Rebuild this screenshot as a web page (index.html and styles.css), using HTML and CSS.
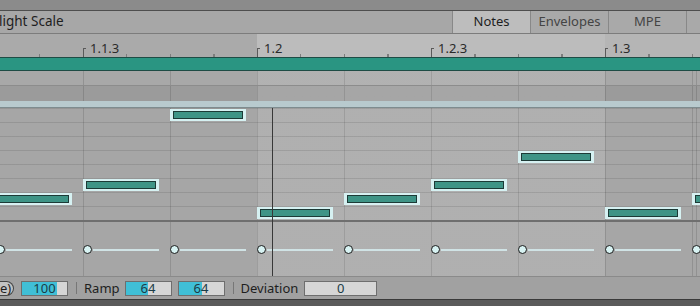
FILE: index.html
```html
<!DOCTYPE html>
<html lang="en">
<head>
    <meta charset="UTF-8">
    <meta name="viewport" content="width=device-width, initial-scale=1.0">
    <title>Clip Notes</title>
    <link rel="stylesheet" href="styles.css">
</head>
<body>
    <div class="editor">
        <div class="top-strip"></div>

        <div class="header">
            <span class="title">light Scale</span>
            <div class="tabs">
                <div class="tab active">Notes</div>
                <div class="tab">Envelopes</div>
                <div class="tab">MPE</div>
                <div class="tab"></div>
            </div>
        </div>

        <div class="ruler">
            <span class="mark">1.1.3</span>
            <span class="mark">1.2</span>
            <span class="mark">1.2.3</span>
            <span class="mark">1.3</span>
        </div>

        <div class="clip-bar"></div>
        <div class="lane lane-a"></div>
        <div class="lane lane-b"></div>
        <div class="fold-band"></div>

        <div class="roll">
            <div class="notes">
                <div class="note" style="grid-column:1;grid-row:7"><span></span></div>
                <div class="note" style="grid-column:2;grid-row:6"><span></span></div>
                <div class="note" style="grid-column:3;grid-row:1"><span></span></div>
                <div class="note" style="grid-column:4;grid-row:8"><span></span></div>
                <div class="note" style="grid-column:5;grid-row:7"><span></span></div>
                <div class="note" style="grid-column:6;grid-row:6"><span></span></div>
                <div class="note" style="grid-column:7;grid-row:4"><span></span></div>
                <div class="note" style="grid-column:8;grid-row:8"><span></span></div>
                <div class="note" style="grid-column:9;grid-row:7"><span></span></div>
            </div>

            <div class="divider"></div>

            <div class="velocity">
                <div class="vel"><i></i><b></b></div>
                <div class="vel"><i></i><b></b></div>
                <div class="vel"><i></i><b></b></div>
                <div class="vel"><i></i><b></b></div>
                <div class="vel"><i></i><b></b></div>
                <div class="vel"><i></i><b></b></div>
                <div class="vel"><i></i><b></b></div>
                <div class="vel"><i></i><b></b></div>
                <div class="vel"><i></i><b></b></div>
            </div>

            <div class="playhead"></div>
        </div>

        <div class="controls">
            <span class="pill">e)</span>
            <span class="field first" style="--fill:78%">100</span>
            <span class="sep"></span>
            <span class="label">Ramp</span>
            <span class="field ramp" style="--fill:50%">64</span>
            <span class="field ramp2" style="--fill:50%">64</span>
            <span class="sep"></span>
            <span class="label">Deviation</span>
            <span class="field wide" style="--fill:0%">0</span>
        </div>

        <div class="footer"></div>
    </div>
</body>
</html>
```

FILE: styles.css
```css
* {
    margin: 0;
    padding: 0;
    box-sizing: border-box;
}

body {
    font-family: 'Noto Sans', 'Liberation Sans', sans-serif;
    background: #5c5c5c;
    width: 700px;
    height: 306px;
    overflow: hidden;
}

.editor {
    --shade: linear-gradient(90deg, transparent 257px, rgba(255, 255, 255, 0.11) 257px, rgba(255, 255, 255, 0.11) 605px, transparent 605px);
    --cols: repeating-linear-gradient(90deg, rgba(0, 0, 0, 0.13) 0 1px, transparent 1px 87px);
    display: flex;
    flex-direction: column;
    width: 700px;
    height: 306px;
    overflow: hidden;
}

.top-strip {
    height: 11px;
    background: #8b8b8b;
    border-bottom: 1px solid #4e4e4e;
}

.header {
    height: 23px;
    display: flex;
    align-items: stretch;
    background: #a7a7a7;
    border-bottom: 1px solid #7c7c7c;
    font-size: 13.5px;
    color: #1e1e1e;
}

.title {
    flex: 1;
    line-height: 21px;
    margin-left: -1px;
}

.tabs {
    display: flex;
}

.tab {
    width: 78px;
    border-left: 1px solid #888;
    background: #a9a9a9;
    color: #444;
    text-align: center;
    line-height: 21px;
    font-size: 13px;
}

.tab.active {
    background: #bdbdbd;
    color: #1e1e1e;
}

.tab:last-child {
    width: 14px;
}

.ruler {
    height: 23px;
    display: flex;
    overflow: hidden;
    padding-left: 83px;
    background-color: #aaaaaa;
    background-image:
        repeating-linear-gradient(90deg, #7d7d7d 0 1px, transparent 1px 43.5px),
        linear-gradient(90deg, transparent 257px, #bcbcbc 257px, #bcbcbc 605px, #b5b5b5 605px);
    background-size: 100% 3px, 100% 100%;
    background-position: -4px 100%, 0 0;
    background-repeat: no-repeat;
    font-size: 13px;
    color: #2a2a2a;
}

.mark {
    flex: 0 0 174px;
    padding-left: 7px;
    padding-top: 8px;
    line-height: 13px;
    position: relative;
    background: linear-gradient(#5a5a5a, #5a5a5a) 0 14px / 3px 1px no-repeat;
}

.mark::before {
    content: '';
    position: absolute;
    left: 0;
    top: 14px;
    bottom: 0;
    width: 1px;
    background: #5a5a5a;
}

.clip-bar {
    height: 14px;
    background: #2a9582;
    border-top: 1px solid #1e4c45;
    border-bottom: 1px solid #1e4c45;
}

.lane {
    height: 15px;
    background-image: var(--shade), var(--cols);
    background-position: 0 0, -4px 0;
}

.lane-a {
    background-color: #a8a8a8;
    border-bottom: 1px solid #8c8c8c;
}

.lane-b {
    height: 15px;
    background-color: #9b9b9b;
}

.fold-band {
    height: 7px;
    background: #b8cace;
    border-bottom: 1px solid #7e8c8f;
}

.roll {
    position: relative;
    overflow: hidden;
    background-color: #a6a6a6;
    background-image: var(--shade), var(--cols);
    background-position: 0 0, -4px 0;
}

.notes {
    display: grid;
    grid-template-columns: repeat(9, 87px);
    grid-template-rows: repeat(8, 14px);
    margin-left: -4px;
    background-image: repeating-linear-gradient(180deg, rgba(0, 0, 0, 0.1) 0 1px, transparent 1px 14px);
}

.note {
    width: 76px;
    height: 12px;
    margin-top: 1px;
    padding: 2px 3px;
    background: #d6f1f2;
}

.note span {
    display: block;
    height: 8px;
    background: #3e9486;
    border: 1px solid #1c3a36;
}

.divider {
    height: 2px;
    background: #6f6f6f;
}

.velocity {
    height: 54px;
    display: grid;
    grid-template-columns: repeat(9, 87px);
    align-items: center;
    margin-left: -4px;
    padding-top: 1px;
}

.vel {
    display: flex;
    align-items: center;
}

.vel i {
    width: 9px;
    height: 9px;
    border: 1px solid #1a1a1a;
    border-radius: 50%;
    background: #d8f3f3;
}

.vel b {
    width: 66px;
    height: 2px;
    margin-left: 1px;
    background: #d0e3e5;
}

.playhead {
    position: absolute;
    left: 272px;
    top: 0;
    bottom: 0;
    width: 1px;
    background: #383838;
}

.controls {
    height: 23px;
    display: flex;
    align-items: center;
    background: #a1a1a1;
    border-top: 1px solid #8a8a8a;
    font-size: 13px;
    color: #1e1e1e;
}

.pill {
    width: 16px;
    height: 15px;
    margin-left: -2px;
    padding-left: 2px;
    line-height: 13px;
    border: 1px solid #444;
    border-left: none;
    border-radius: 0 8px 8px 0;
    background: #c3c3c3;
}

.field {
    height: 15px;
    line-height: 13px;
    text-align: center;
    border: 1px solid #6e6e6e;
    color: #1b3c46;
    background: linear-gradient(90deg, #40bfd6 var(--fill), #d6d6d6 var(--fill));
}

.field.first {
    width: 47px;
    margin-left: 7px;
}

.field.ramp {
    width: 47px;
    margin-left: 5px;
}

.field.ramp2 {
    width: 47px;
    margin-left: 6px;
}

.field.wide {
    width: 73px;
    margin-left: 6px;
}

.sep {
    width: 1px;
    height: 12px;
    background: #777;
    margin: 0 7px 0 8px;
}

.label {
    color: #1e1e1e;
}

.footer {
    flex: 1;
    background: #5b5b5b;
    border-top: 1px solid #3a3a3a;
}
```
